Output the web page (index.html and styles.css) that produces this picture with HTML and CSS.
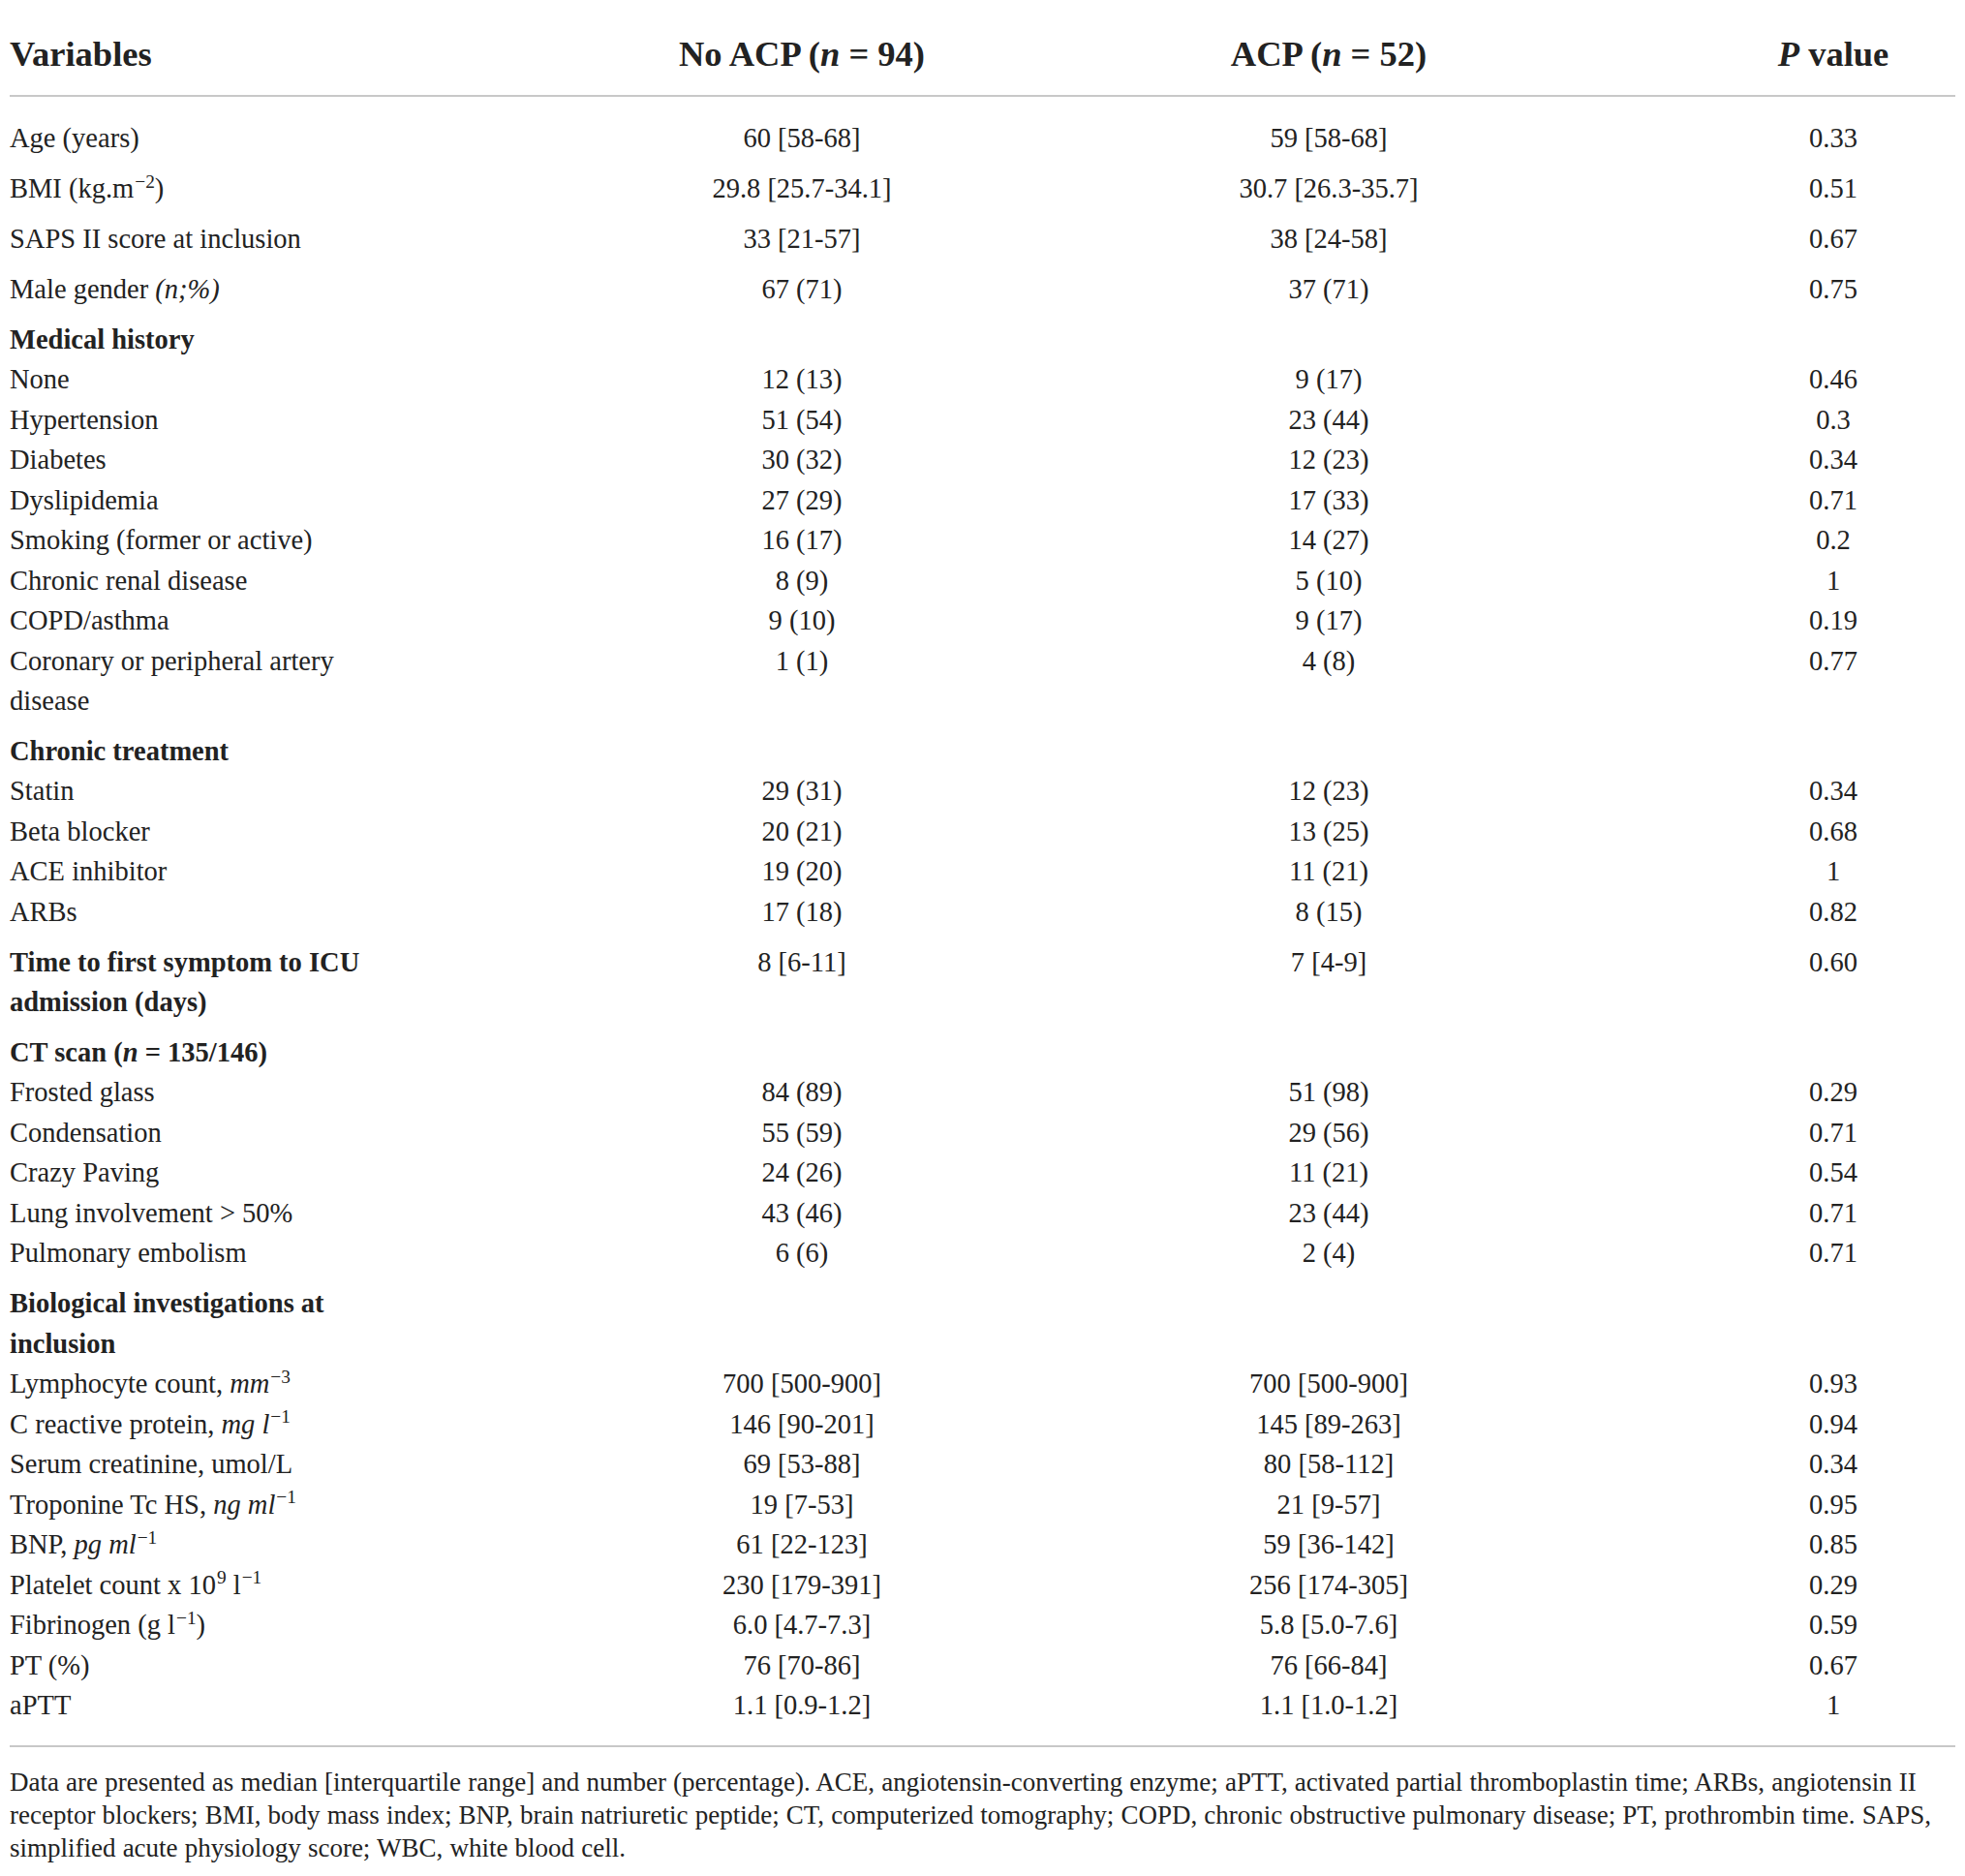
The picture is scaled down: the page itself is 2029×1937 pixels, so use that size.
FILE: index.html
```html
<!DOCTYPE HTML>
<html>
<head>
<meta charset="utf-8">
<title>Table</title>
<link rel="stylesheet" href="styles.css">
</head>

<body>
<div class="page">
	<table class="tbl">
		<colgroup>
			<col class="c-var">
			<col class="c-no">
			<col class="c-acp">
			<col class="c-p">
		</colgroup>
		<thead>
			<tr>
				<th class="var">Variables</th>
				<th>No ACP (<i>n</i> = 94)</th>
				<th>ACP (<i>n</i> = 52)</th>
				<th><i>P</i> value</th>
			</tr>
		</thead>
		<tbody>
			<tr class="top"><td class="var">Age (years)</td><td>60 [58-68]</td><td>59 [58-68]</td><td>0.33</td></tr>
			<tr class="top"><td class="var">BMI (kg.m<sup>&minus;2</sup>)</td><td>29.8 [25.7-34.1]</td><td>30.7 [26.3-35.7]</td><td>0.51</td></tr>
			<tr class="top"><td class="var">SAPS II score at inclusion</td><td>33 [21-57]</td><td>38 [24-58]</td><td>0.67</td></tr>
			<tr class="top"><td class="var">Male gender <i>(n;%)</i></td><td>67 (71)</td><td>37 (71)</td><td>0.75</td></tr>

			<tr class="top sec"><td class="var">Medical history</td><td></td><td></td><td></td></tr>
			<tr><td class="var">None</td><td>12 (13)</td><td>9 (17)</td><td>0.46</td></tr>
			<tr><td class="var">Hypertension</td><td>51 (54)</td><td>23 (44)</td><td>0.3</td></tr>
			<tr><td class="var">Diabetes</td><td>30 (32)</td><td>12 (23)</td><td>0.34</td></tr>
			<tr><td class="var">Dyslipidemia</td><td>27 (29)</td><td>17 (33)</td><td>0.71</td></tr>
			<tr><td class="var">Smoking (former or active)</td><td>16 (17)</td><td>14 (27)</td><td>0.2</td></tr>
			<tr><td class="var">Chronic renal disease</td><td>8 (9)</td><td>5 (10)</td><td>1</td></tr>
			<tr><td class="var">COPD/asthma</td><td>9 (10)</td><td>9 (17)</td><td>0.19</td></tr>
			<tr><td class="var">Coronary or peripheral artery disease</td><td>1 (1)</td><td>4 (8)</td><td>0.77</td></tr>

			<tr class="top sec"><td class="var">Chronic treatment</td><td></td><td></td><td></td></tr>
			<tr><td class="var">Statin</td><td>29 (31)</td><td>12 (23)</td><td>0.34</td></tr>
			<tr><td class="var">Beta blocker</td><td>20 (21)</td><td>13 (25)</td><td>0.68</td></tr>
			<tr><td class="var">ACE inhibitor</td><td>19 (20)</td><td>11 (21)</td><td>1</td></tr>
			<tr><td class="var">ARBs</td><td>17 (18)</td><td>8 (15)</td><td>0.82</td></tr>

			<tr class="top sec"><td class="var">Time to first symptom to ICU admission (days)</td><td>8 [6-11]</td><td>7 [4-9]</td><td>0.60</td></tr>

			<tr class="top sec"><td class="var">CT scan (<i>n</i> = 135/146)</td><td></td><td></td><td></td></tr>
			<tr><td class="var">Frosted glass</td><td>84 (89)</td><td>51 (98)</td><td>0.29</td></tr>
			<tr><td class="var">Condensation</td><td>55 (59)</td><td>29 (56)</td><td>0.71</td></tr>
			<tr><td class="var">Crazy Paving</td><td>24 (26)</td><td>11 (21)</td><td>0.54</td></tr>
			<tr><td class="var">Lung involvement &gt; 50%</td><td>43 (46)</td><td>23 (44)</td><td>0.71</td></tr>
			<tr><td class="var">Pulmonary embolism</td><td>6 (6)</td><td>2 (4)</td><td>0.71</td></tr>

			<tr class="top sec"><td class="var">Biological investigations at inclusion</td><td></td><td></td><td></td></tr>
			<tr><td class="var">Lymphocyte count, <i>mm</i><sup>&minus;3</sup></td><td>700 [500-900]</td><td>700 [500-900]</td><td>0.93</td></tr>
			<tr><td class="var">C reactive protein, <i>mg l</i><sup>&minus;1</sup></td><td>146 [90-201]</td><td>145 [89-263]</td><td>0.94</td></tr>
			<tr><td class="var">Serum creatinine, umol/L</td><td>69 [53-88]</td><td>80 [58-112]</td><td>0.34</td></tr>
			<tr><td class="var">Troponine Tc HS, <i>ng ml</i><sup>&minus;1</sup></td><td>19 [7-53]</td><td>21 [9-57]</td><td>0.95</td></tr>
			<tr><td class="var">BNP, <i>pg ml</i><sup>&minus;1</sup></td><td>61 [22-123]</td><td>59 [36-142]</td><td>0.85</td></tr>
			<tr><td class="var">Platelet count x 10<sup>9</sup> l<sup>&minus;1</sup></td><td>230 [179-391]</td><td>256 [174-305]</td><td>0.29</td></tr>
			<tr><td class="var">Fibrinogen (g l<sup>&minus;1</sup>)</td><td>6.0 [4.7-7.3]</td><td>5.8 [5.0-7.6]</td><td>0.59</td></tr>
			<tr><td class="var">PT (%)</td><td>76 [70-86]</td><td>76 [66-84]</td><td>0.67</td></tr>
			<tr><td class="var">aPTT</td><td>1.1 [0.9-1.2]</td><td>1.1 [1.0-1.2]</td><td>1</td></tr>
		</tbody>
	</table>

	<p class="note">Data are presented as median [interquartile range] and number (percentage). ACE, angiotensin-converting enzyme; aPTT, activated partial thromboplastin time; ARBs, angiotensin II receptor blockers; BMI, body mass index; BNP, brain natriuretic peptide; CT, computerized tomography; COPD, chronic obstructive pulmonary disease; PT, prothrombin time. SAPS, simplified acute physiology score; WBC, white blood cell.</p>
</div>
</body>
</html>
```

FILE: styles.css
```css
* {margin:0; padding:0;}
body {background:#fff; color:#222; font-family:"Liberation Serif", "Times New Roman", serif;}

.page {padding:10px 10px 0;}

.tbl {width:2009px; border-collapse:collapse; table-layout:fixed;}
.tbl col.c-var {width:669px;}
.tbl col.c-no {width:298px;}
.tbl col.c-acp {width:790px;}
.tbl col.c-p {width:252px;}

.tbl th {font-size:36.5px; line-height:48px; font-weight:bold; text-align:center; padding:22px 0 18px; border-bottom:2px solid #c8c8c8; white-space:nowrap;}
.tbl th.var {text-align:left;}

.tbl td {font-size:28.5px; line-height:41.5px; text-align:center; vertical-align:top;}
.tbl td.var {text-align:left; padding-right:270px;}
.tbl tr.top td {padding-top:10.3px;}
.tbl tbody tr:first-child td {padding-top:22.4px;}
.tbl tbody tr:last-child td {padding-bottom:20px; border-bottom:2px solid #c8c8c8;}
.tbl tr.sec td.var {font-weight:bold;}

sup {font-size:0.68em; line-height:0; vertical-align:0.55em; margin-left:1px;}

.note {width:2009px; margin-top:19px; font-size:27px; line-height:34px; word-spacing:0.4px;}
```
